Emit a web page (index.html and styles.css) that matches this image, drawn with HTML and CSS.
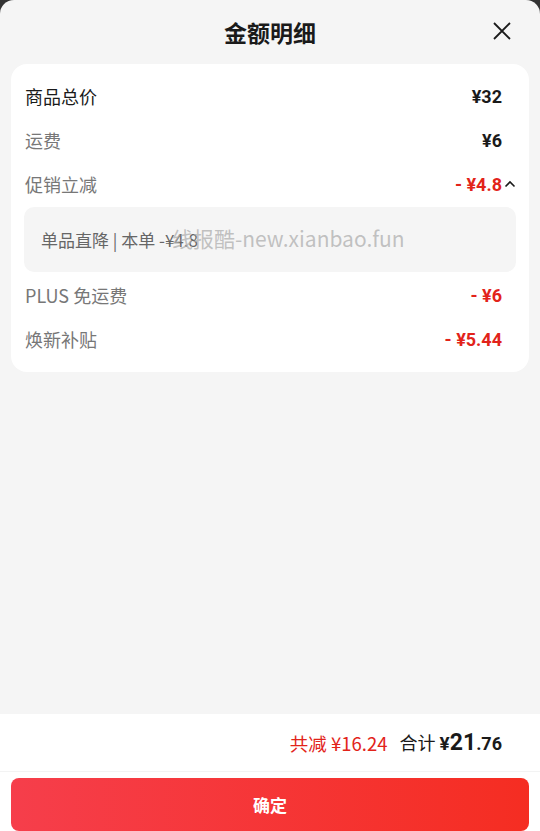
FILE: index.html
```html
<!DOCTYPE html>
<html lang="zh-CN">
<head>
    <meta charset="UTF-8">
    <meta name="viewport" content="width=device-width, initial-scale=1.0">
    <title>金额明细</title>
    <link rel="stylesheet" href="styles.css">
</head>
<body>

<div class="sheet">
    <header class="sheet-header">
        <h1>金额明细</h1>
        <button class="close-btn" aria-label="关闭">
            <svg width="18" height="18" viewBox="0 0 18 18"><path d="M1 1L17 17M17 1L1 17" stroke="#1a1a1a" stroke-width="1.8" fill="none"/></svg>
        </button>
    </header>

    <section class="card">
        <div class="row">
            <span class="label main">商品总价</span>
            <span class="amount">¥32</span>
        </div>
        <div class="row">
            <span class="label">运费</span>
            <span class="amount">¥6</span>
        </div>
        <div class="row">
            <span class="label">促销立减</span>
            <span class="amount minus">- ¥4.8</span>
            <svg class="chevron" width="12" height="8" viewBox="0 0 12 8"><path d="M1.5 6.5L6 2L10.5 6.5" stroke="#1a1a1a" stroke-width="1.6" fill="none"/></svg>
        </div>
        <div class="detail">
            <span class="detail-text">单品直降 | 本单 -¥4.8</span>
            <span class="watermark">线报酷-new.xianbao.fun</span>
        </div>
        <div class="row">
            <span class="label">PLUS 免运费</span>
            <span class="amount minus">- ¥6</span>
        </div>
        <div class="row">
            <span class="label">焕新补贴</span>
            <span class="amount minus">- ¥5.44</span>
        </div>
    </section>

    <div class="spacer"></div>

    <footer class="footer">
        <div class="summary">
            <span class="saved">共减 ¥16.24</span>
            <span class="total">合计 <b class="yen">¥</b><b class="int">21</b><b class="dec">.76</b></span>
        </div>
        <button class="confirm">确定</button>
    </footer>
</div>

</body>
</html>
```

FILE: styles.css
```css
/* Bottom sheet: amount breakdown */
html, body {
    margin: 0;
    height: 100%;
    background-color: #333333;
}
body {
    font-family: "Noto Sans CJK SC", "Noto Sans", sans-serif;
    color: #1a1a1a;
}
.sheet {
    height: 831px;
    display: flex;
    flex-direction: column;
    background-color: #f5f5f5;
    border-radius: 14px 14px 0 0;
    overflow: hidden;
}
.sheet-header {
    height: 64px;
    display: flex;
    align-items: center;
    justify-content: center;
    position: relative;
}
.sheet-header h1 {
    margin: 0;
    font-size: 23px;
    font-weight: 700;
    line-height: 1;
}
.close-btn {
    position: absolute;
    right: 28px;
    top: 21px;
    width: 20px;
    height: 20px;
    padding: 0;
    border: none;
    background: none;
    display: flex;
    align-items: center;
    justify-content: center;
}
.card {
    margin: 0 11px;
    padding: 10px 13px 11px;
    background-color: #ffffff;
    border-radius: 16px;
}
.row {
    height: 44px;
    display: flex;
    align-items: center;
    padding: 0 14px 0 1px;
    position: relative;
}
.label {
    flex: 1;
    font-size: 18px;
    color: #777777;
}
.label.main {
    color: #1a1a1a;
}
.amount {
    font-family: Roboto, "Noto Sans", sans-serif;
    font-size: 18px;
    font-weight: 700;
    color: #1a1a1a;
}
.amount.minus {
    color: #e2231a;
}
.chevron {
    position: absolute;
    right: 0;
    top: 18px;
}
.detail {
    position: relative;
    height: 65px;
    margin: 1px 0 1px;
    padding: 0 17px;
    display: flex;
    align-items: center;
    background-color: #f5f5f5;
    border-radius: 10px;
}
.detail-text {
    font-size: 17px;
    color: #666666;
}
.watermark {
    position: absolute;
    left: 148px;
    top: 18px;
    font-size: 21px;
    line-height: 1.3;
    color: rgba(175, 175, 175, 0.75);
    white-space: nowrap;
}
.spacer {
    flex: 1;
}
.footer {
    background-color: #ffffff;
    padding: 0 11px;
}
.summary {
    height: 58px;
    display: flex;
    align-items: center;
    justify-content: flex-end;
    gap: 12px;
    padding-right: 38px;
    border-bottom: 1px solid #f3f3f3;
    margin: 0 -11px;
    box-sizing: border-box;
}
.saved {
    font-size: 18.5px;
    color: #e2231a;
}
.total {
    font-size: 18px;
    color: #1a1a1a;
}
.total .yen {
    font-family: Roboto, sans-serif;
    font-size: 19px;
}
.total .int {
    font-family: Roboto, sans-serif;
    font-size: 23px;
}
.total .dec {
    font-family: Roboto, sans-serif;
    font-size: 18px;
}
.confirm {
    display: block;
    width: 100%;
    height: 53px;
    margin-top: 6px;
    border: none;
    border-radius: 8px;
    background: linear-gradient(90deg, #f63e4b 0%, #f52d22 100%);
    color: #ffffff;
    font-family: "Noto Sans CJK SC", sans-serif;
    font-size: 17px;
    font-weight: 700;
}
```
